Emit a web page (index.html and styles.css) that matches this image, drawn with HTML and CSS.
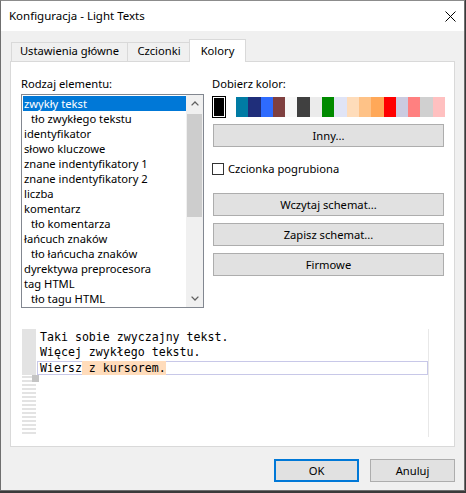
FILE: index.html
```html
<!DOCTYPE html>
<html lang="pl">
<head>
<meta charset="utf-8">
<title>Konfiguracja - Light Texts</title>
<link rel="stylesheet" href="styles.css">
</head>
<body>
<div class="window">
  <div class="titlebar">
    <span class="title">Konfiguracja - Light Texts</span>
    <svg class="close" width="11" height="11" viewBox="0 0 11 11"><path d="M0.5 0.5 L10.5 10.5 M10.5 0.5 L0.5 10.5" stroke="#000" stroke-width="1" fill="none"/></svg>
  </div>
  <div class="client">
    <div class="tabs">
      <div class="tab t1">Ustawienia główne</div>
      <div class="tab t2">Czcionki</div>
      <div class="tab t3">Kolory</div>
    </div>
    <div class="panel">
      <div class="top">
        <div class="col-left">
          <div class="label lbl-left">Rodzaj elementu:</div>
          <div class="listbox">
            <ul class="items">
              <li class="sel">zwykły tekst</li>
              <li class="ind">tło zwykłego tekstu</li>
              <li>identyfikator</li>
              <li>słowo kluczowe</li>
              <li>znane indentyfikatory 1</li>
              <li>znane indentyfikatory 2</li>
              <li>liczba</li>
              <li>komentarz</li>
              <li class="ind">tło komentarza</li>
              <li>łańcuch znaków</li>
              <li class="ind">tło łańcucha znaków</li>
              <li>dyrektywa preprocesora</li>
              <li>tag HTML</li>
              <li class="ind">tło tagu HTML</li>
            </ul>
            <div class="vscroll">
              <div class="arrow"><svg width="8" height="5" viewBox="0 0 8 5"><polyline points="0.6,4.4 4,1 7.4,4.4" fill="none" stroke="#606060" stroke-width="1.3"/></svg></div>
              <div class="track"><div class="thumb"></div></div>
              <div class="arrow"><svg width="8" height="5" viewBox="0 0 8 5"><polyline points="0.6,0.6 4,4 7.4,0.6" fill="none" stroke="#606060" stroke-width="1.3"/></svg></div>
            </div>
          </div>
        </div>
        <div class="col-right">
          <div class="label lbl-right">Dobierz kolor:</div>
          <div class="palette">
            <div class="current"><span></span></div>
            <div class="swatches">
              <span class="c1"></span><span class="c2"></span><span class="c3"></span><span class="c4"></span><span class="c5"></span><span class="c6"></span><span class="c7"></span><span class="c8"></span><span class="c9"></span><span class="c10"></span><span class="c11"></span><span class="c12"></span><span class="c13"></span><span class="c14"></span><span class="c15"></span><span class="c16"></span><span class="c17"></span>
            </div>
          </div>
          <button class="btn side inny">Inny...</button>
          <label class="check"><span class="box"></span>Czcionka pogrubiona</label>
          <button class="btn side wczytaj">Wczytaj schemat...</button>
          <button class="btn side gap7">Zapisz schemat...</button>
          <button class="btn side gap7">Firmowe</button>
        </div>
      </div>
      <div class="preview">
        <div class="gutter">
          <div class="solid"></div>
          <div class="stripes"></div>
        </div>
        <div class="code">
          <div class="line">Taki sobie zwyczajny tekst.</div>
          <div class="line">Więcej zwykłego tekstu.</div>
          <div class="line cur">Wiersz<span class="hl"> z kursorem.</span></div>
        </div>
        <div class="marker"></div>
      </div>
    </div>
    <div class="footer">
      <button class="btn foot ok">OK</button>
      <button class="btn foot">Anuluj</button>
    </div>
  </div>
</div>
</body>
</html>
```
FILE: styles.css
```css
* { box-sizing: border-box; }
html, body { margin: 0; padding: 0; }
body {
  width: 466px;
  height: 493px;
  background: #3a3a3a;
  font-family: "Noto Sans", "Open Sans", sans-serif;
  font-size: 11.2px;
  color: #000;
  overflow: hidden;
}
.window {
  width: 465px;
  height: 491px;
  border: 1px solid #6f6f6f;
  border-top-color: #8c8c8c;
  background: #f0f0f0;
  display: flex;
  flex-direction: column;
}
.titlebar {
  height: 30px;
  flex: none;
  background: #fff;
  display: flex;
  align-items: center;
  padding: 0 8px 0 8px;
  line-height: 30px;
}
.title { flex: 1; font-size: 11.5px; }
.close { display: block; }
.client {
  flex: 1;
  padding: 8px 9px 8px 9px;
  display: flex;
  flex-direction: column;
}
.tabs {
  display: flex;
  align-items: flex-end;
  height: 22px;
  flex: none;
  padding-left: 1px;
  position: relative;
  z-index: 1;
}
.tab {
  border: 1px solid #d9d9d9;
  border-bottom: none;
  text-align: center;
  line-height: 16px;
  height: 19px;
  white-space: nowrap;
}
.t1 { width: 117px; }
.t2 { width: 64px; margin-left: -1px; }
.t3 {
  width: 57px;
  margin-left: -2px;
  height: 23px;
  margin-bottom: -1px;
  background: #fff;
  padding-top: 3px;
}
.panel {
  height: 386px;
  flex: none;
  border: 1px solid #d9d9d9;
  background: #fff;
  padding: 14px 9px 0 10px;
}
.top { display: flex; gap: 8px; }
.col-left { width: 183px; flex: none; }
.col-right { width: 233px; flex: none; }
.label { height: 16px; line-height: 16px; white-space: nowrap; }
.lbl-left { margin-bottom: 2px; }
.lbl-right { margin-bottom: 4px; }
.listbox {
  height: 214px;
  border: 1px solid #828790;
  display: flex;
}
.items {
  flex: 1;
  list-style: none;
  margin: 0;
  padding: 1px 0 0 0;
  overflow: hidden;
}
.items li {
  height: 15px;
  line-height: 15px;
  margin-left: 1px;
  padding-left: 1px;
  white-space: nowrap;
}
.items li.ind { padding-left: 8px; }
.items li.sel { background: #0078d7; color: #fff; }
.vscroll {
  width: 17px;
  flex: none;
  background: #f0f0f0;
  display: flex;
  flex-direction: column;
}
.arrow {
  height: 17px;
  display: flex;
  align-items: center;
  justify-content: center;
}
.arrow svg { display: block; }
.track { flex: 1; padding: 2px 1px 0 1px; }
.thumb { height: 103px; background: #cdcdcd; }
.palette { display: flex; align-items: center; height: 22px; }
.current {
  width: 14px;
  height: 22px;
  border: 1px solid #000;
  padding: 1px;
  background: #fff;
}
.current span { display: block; height: 100%; background: #000; }
.swatches {
  margin-left: 10px;
  width: 209px;
  height: 20px;
  display: grid;
  grid-template-columns: repeat(17, 1fr);
}
.c1 { background: #007ba4; }
.c2 { background: #1f2e7a; }
.c3 { background: #2e6bfe; }
.c4 { background: #7f4040; }
.c5 { background: #f7f7f7; }
.c6 { background: #404040; }
.c7 { background: #ebebeb; }
.c8 { background: #008a00; }
.c9 { background: #e0e4f6; }
.c10 { background: #fedcba; }
.c11 { background: #fec287; }
.c12 { background: #ffa858; }
.c13 { background: #ff0000; }
.c14 { background: #cbcbe0; }
.c15 { background: #ff8080; }
.c16 { background: #d0d0d0; }
.c17 { background: #ffc0c0; }
.btn {
  display: block;
  height: 23px;
  background: #e1e1e1;
  border: 1px solid #adadad;
  font: inherit;
  color: #000;
  padding: 0;
  line-height: 21px;
  text-align: center;
}
.side { width: 231px; margin-left: 1px; }
.inny { margin-top: 6px; }
.check {
  display: flex;
  align-items: center;
  height: 16px;
  margin-top: 14px;
  line-height: 16px;
}
.box {
  width: 12px;
  height: 12px;
  border: 1px solid #333;
  background: #fff;
  margin-right: 4px;
}
.wczytaj { margin-top: 16px; }
.gap7 { margin-top: 7px; }
.preview {
  margin: 21px 0 0 1px;
  width: 407px;
  height: 108px;
  display: flex;
  position: relative;
}
.gutter { width: 14px; flex: none; display: flex; flex-direction: column; }
.gutter .solid { height: 46px; background: #e3e3e3; }
.gutter .stripes {
  margin-top: 1px;
  height: 59px;
  background: repeating-linear-gradient(to bottom, #e3e3e3 0 2px, transparent 2px 4px);
}
.marker {
  position: absolute;
  left: 10px;
  top: 46px;
  width: 7px;
  height: 7px;
  background: #c4c4c4;
}
.code {
  flex: 1;
  border-right: 1px solid #e8e8e8;
  padding-top: 1px;
  font-family: "DejaVu Sans Mono", "Liberation Mono", monospace;
  font-size: 11.6px;
}
.line {
  height: 15px;
  line-height: 15px;
  padding-left: 4px;
  white-space: pre;
}
.line.cur {
  height: 14px;
  margin-top: 1px;
  margin-left: 1px;
  border: 1px solid #c8c8e8;
  line-height: 12px;
  padding-left: 2px;
}
.hl { background: #ffdcbb; }
.footer {
  display: flex;
  justify-content: flex-end;
  gap: 11px;
  margin-top: 12px;
}
.foot { width: 85px; }
.ok { border: 2px solid #0078d7; line-height: 19px; }
```
